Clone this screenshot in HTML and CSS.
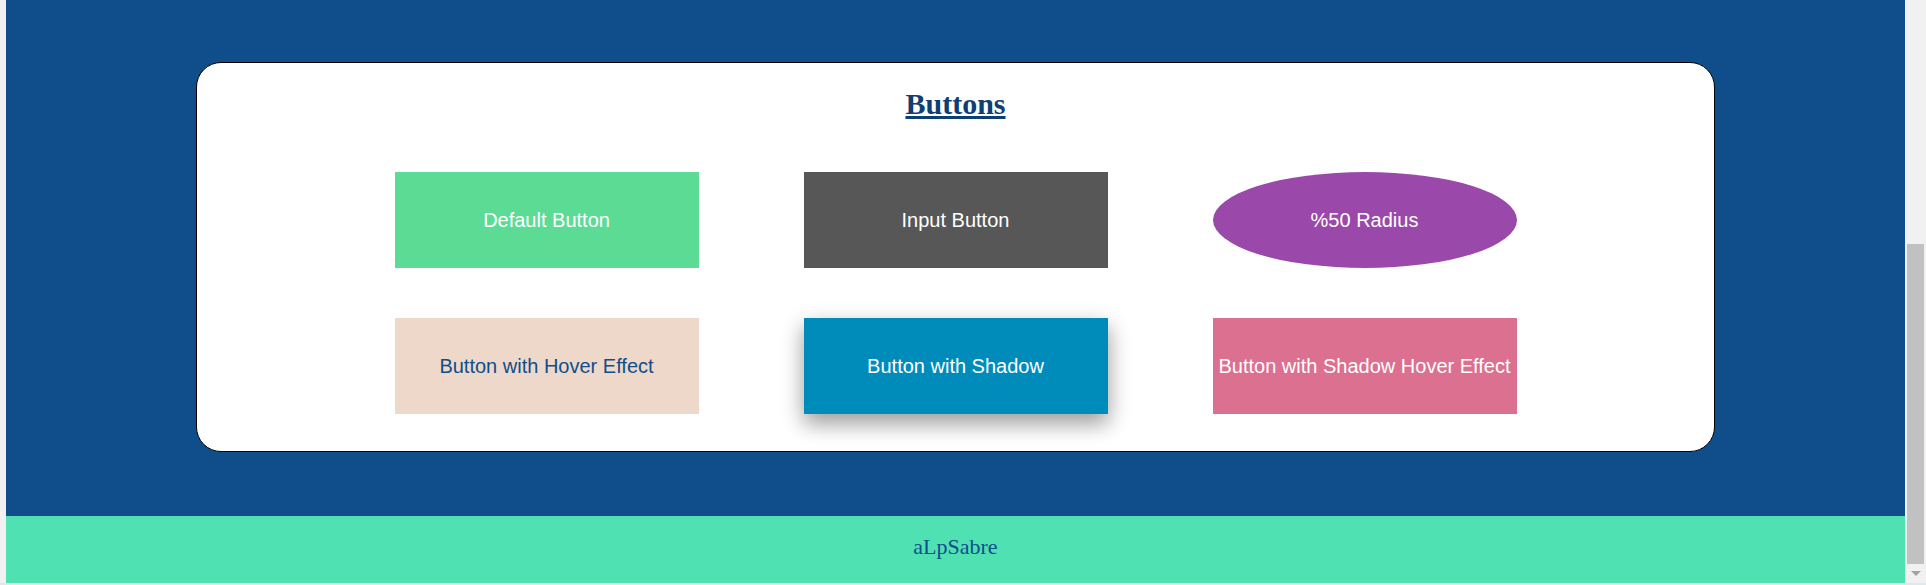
FILE: index.html
```html
<!DOCTYPE html>
<html lang="en">
<head>
<meta charset="utf-8">
<title>Buttons</title>
<link rel="stylesheet" href="styles.css">
</head>
<body>
<div class="window">
  <div class="edge"></div>
  <div class="page">
    <main class="main">
      <section class="card">
        <h2 class="title">Buttons</h2>
        <div class="grid">
          <button class="btn btn-default">Default Button</button>
          <input class="btn btn-input" type="button" value="Input Button">
          <button class="btn btn-radius">%50 Radius</button>
          <button class="btn btn-hover">Button with Hover Effect</button>
          <button class="btn btn-shadow">Button with Shadow</button>
          <button class="btn btn-shadow-hover">Button with Shadow Hover Effect</button>
        </div>
      </section>
    </main>
    <footer class="footer">aLpSabre</footer>
  </div>
  <div class="scrollbar">
    <div class="thumb"></div>
    <div class="arrow"></div>
  </div>
</div>
<div class="frame-line"></div>
</body>
</html>
```

FILE: styles.css
```css
html, body {
  margin: 0;
  padding: 0;
  height: 585px;
  overflow: hidden;
}

body {
  background: #f1f1f1;
  font-family: "Liberation Serif", "Times New Roman", serif;
}

.window {
  display: flex;
  height: 583px;
}

.edge {
  width: 6px;
  flex: none;
  background: #f1f1f1;
}

.page {
  flex: 1;
  display: flex;
  flex-direction: column;
}

.main {
  background: #104e8b;
  height: 516px;
  padding-top: 62px;
  box-sizing: border-box;
}

.card {
  width: 80%;
  margin: 0 auto;
  background: #ffffff;
  border: 1px solid #000000;
  border-radius: 25px;
  box-sizing: border-box;
  padding: 24px 0 37px;
}

.title {
  margin: 0 0 51px;
  text-align: center;
  font-family: "Liberation Serif", "Times New Roman", serif;
  font-weight: bold;
  font-size: 30px;
  line-height: 34px;
  color: #0d3f74;
  text-decoration: underline;
}

.grid {
  display: grid;
  grid-template-columns: repeat(3, 304px);
  grid-auto-rows: 96px;
  column-gap: 105px;
  row-gap: 50px;
  justify-content: center;
}

.btn {
  margin: 0;
  padding: 0;
  border: none;
  width: 304px;
  height: 96px;
  font-family: "Liberation Sans", Arial, sans-serif;
  font-size: 20px;
  color: #ffffff;
  text-align: center;
  cursor: pointer;
  -webkit-appearance: none;
  appearance: none;
}

.btn-default { background: #5cdb95; }
.btn-input { background: #575757; }
.btn-radius { background: #9a49aa; border-radius: 50%; }
.btn-hover { background: #eed8c9; color: #104e8b; }
.btn-shadow {
  background: #008cba;
  box-shadow: 0 10px 18px 0 rgba(0, 0, 0, 0.24), 0 8px 24px 0 rgba(0, 0, 0, 0.19);
}
.btn-shadow-hover { background: #dc7090; }

.footer {
  height: 67px;
  background: #4fe1b2;
  color: #104e8b;
  font-size: 22px;
  display: flex;
  align-items: center;
  justify-content: center;
  padding-bottom: 5px;
  box-sizing: border-box;
}

.scrollbar {
  width: 21px;
  flex: none;
  background: #f1f1f1;
  display: flex;
  flex-direction: column;
  align-items: center;
  padding-top: 244px;
  box-sizing: border-box;
}

.thumb {
  width: 17px;
  height: 320px;
  background: #c1c1c1;
}

.arrow {
  margin-top: 7px;
  width: 0;
  height: 0;
  border-left: 5px solid transparent;
  border-right: 5px solid transparent;
  border-top: 5px solid #a3a3a3;
}

.frame-line {
  height: 2px;
  background: #dde9ee;
}
```
